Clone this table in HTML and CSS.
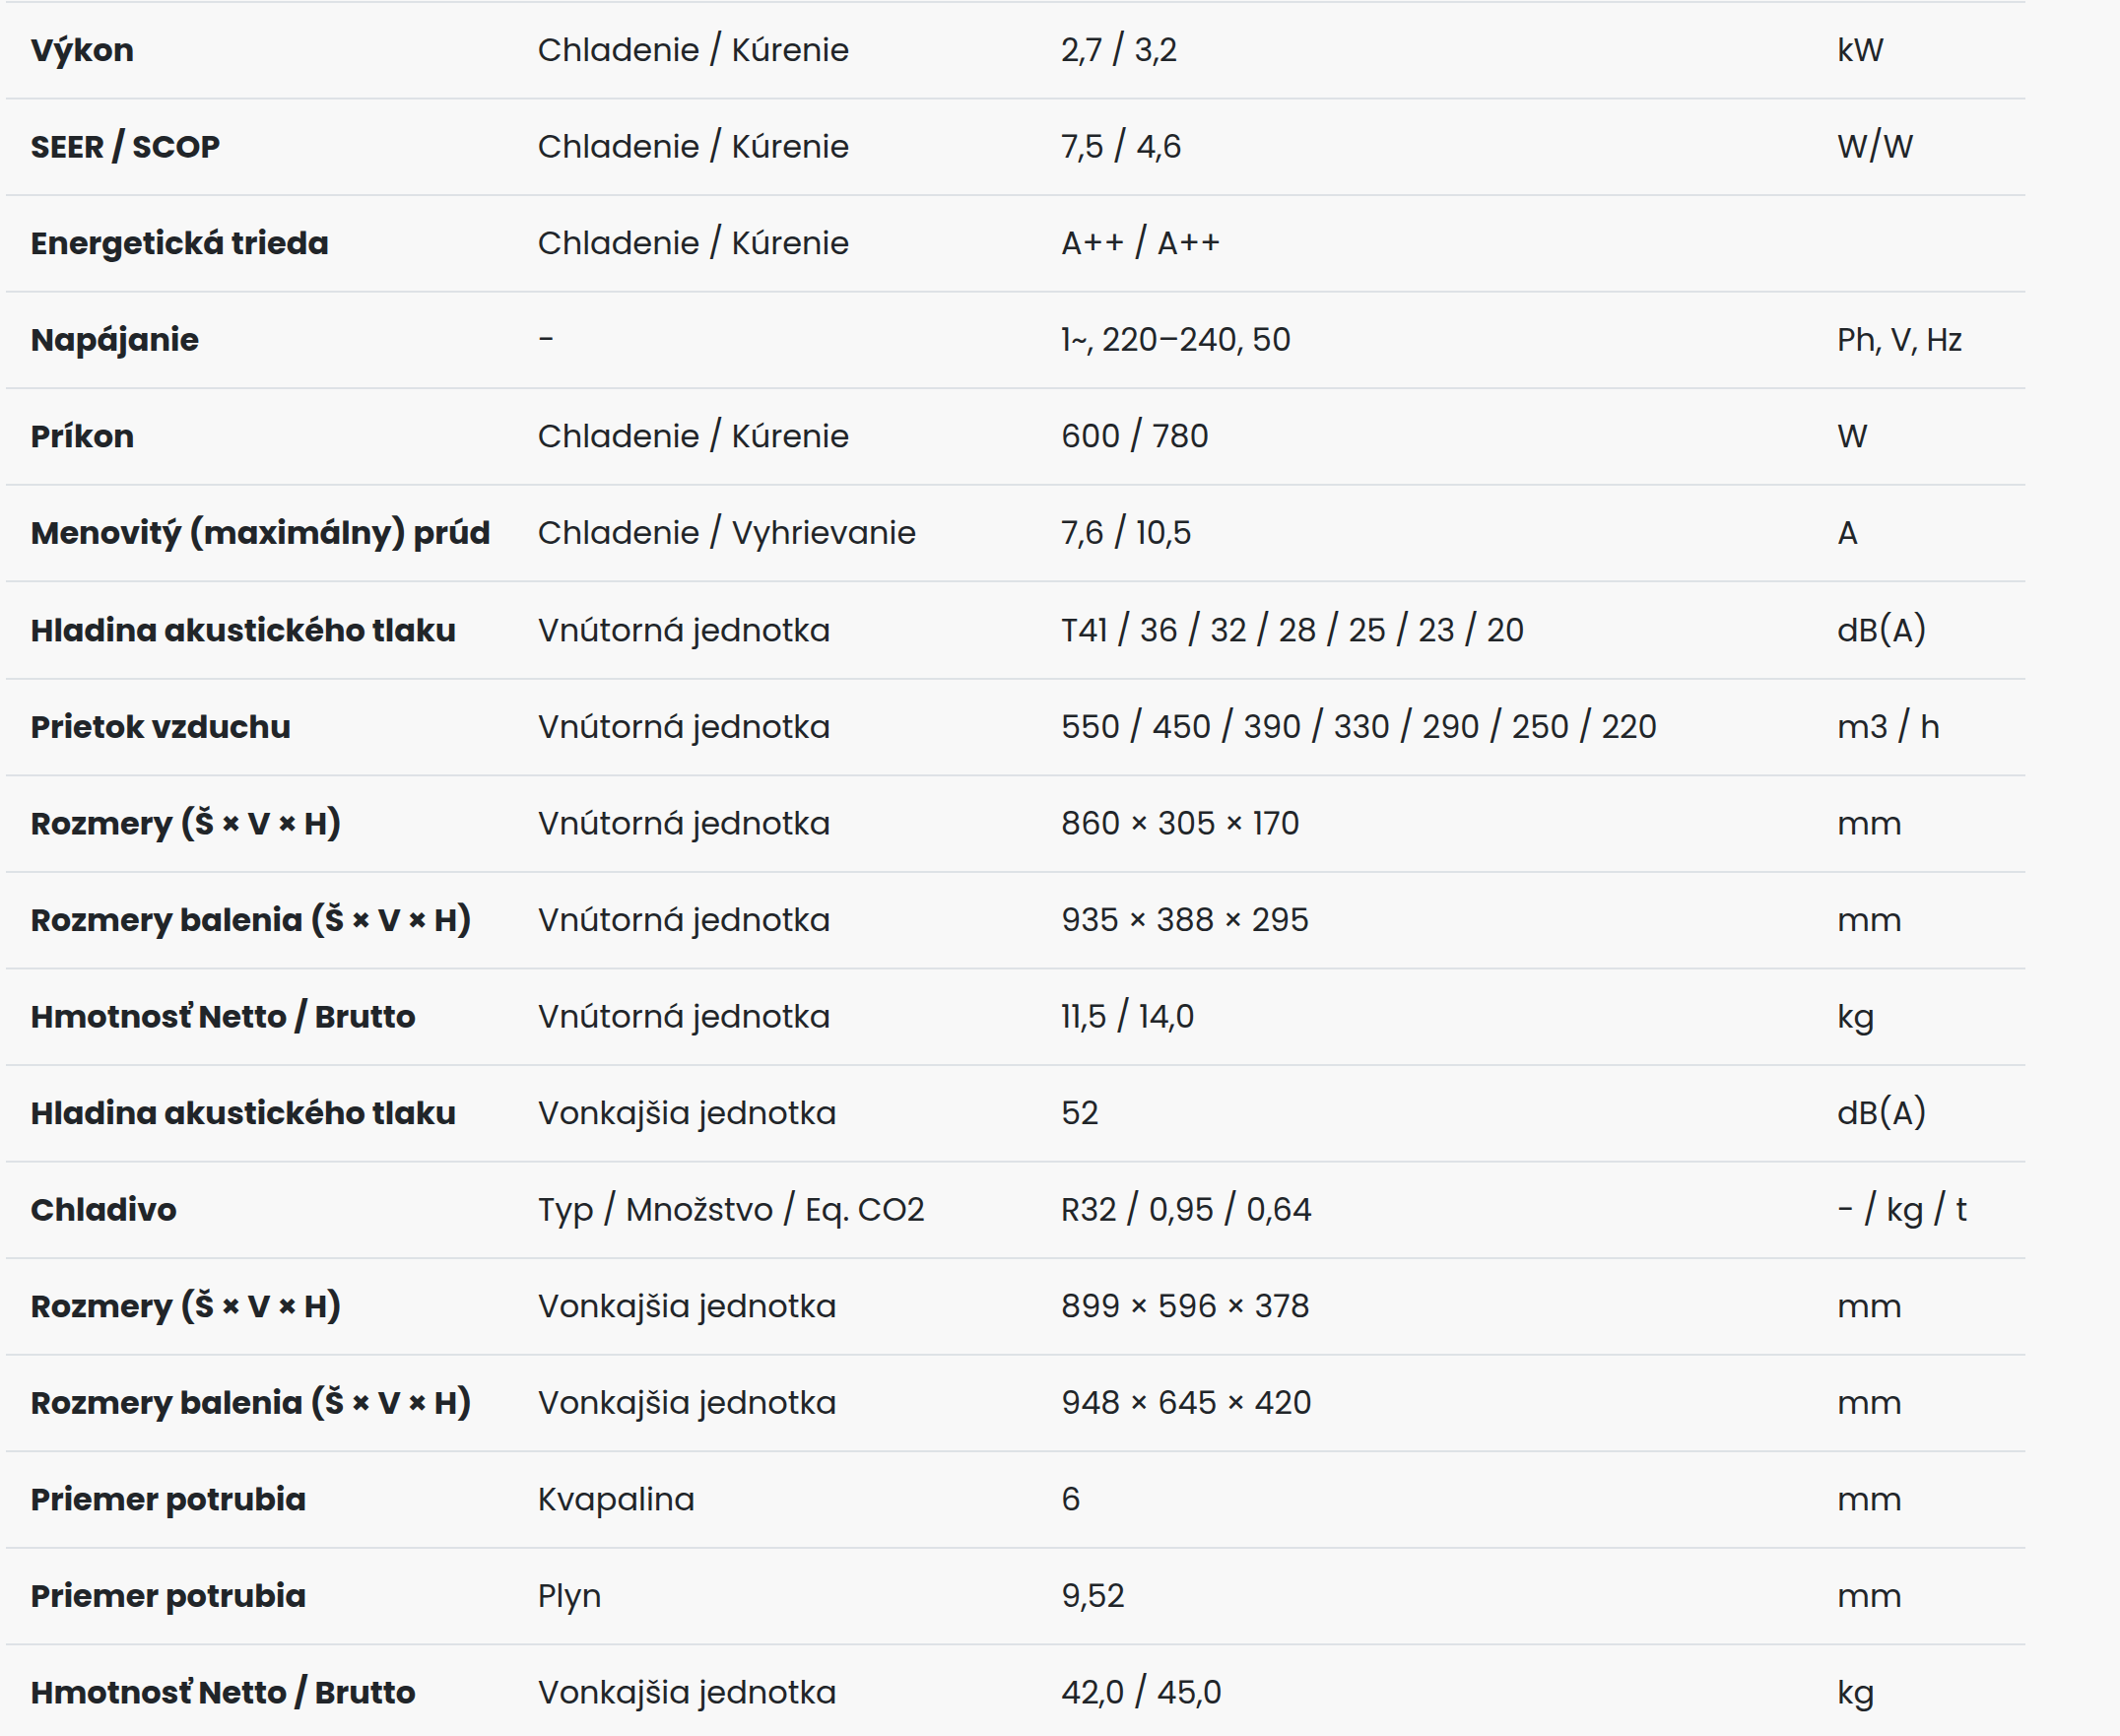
FILE: index.html
```html
<!DOCTYPE html>
<html lang="sk">
<head>
<meta charset="utf-8">
<title>Technické parametre</title>
<link rel="stylesheet" href="styles.css">
</head>
<body>
<div class="specs">
  <div class="row"><div class="name">Výkon</div><div class="cond">Chladenie / Kúrenie</div><div class="val">2,7 / 3,2</div><div class="unit">kW</div></div>
  <div class="row"><div class="name">SEER / SCOP</div><div class="cond">Chladenie / Kúrenie</div><div class="val">7,5 / 4,6</div><div class="unit">W/W</div></div>
  <div class="row"><div class="name">Energetická trieda</div><div class="cond">Chladenie / Kúrenie</div><div class="val">A++ / A++</div><div class="unit"></div></div>
  <div class="row"><div class="name">Napájanie</div><div class="cond">-</div><div class="val">1~, 220–240, 50</div><div class="unit">Ph, V, Hz</div></div>
  <div class="row"><div class="name">Príkon</div><div class="cond">Chladenie / Kúrenie</div><div class="val">600 / 780</div><div class="unit">W</div></div>
  <div class="row"><div class="name">Menovitý (maximálny) prúd</div><div class="cond">Chladenie / Vyhrievanie</div><div class="val">7,6 / 10,5</div><div class="unit">A</div></div>
  <div class="row"><div class="name">Hladina akustického tlaku</div><div class="cond">Vnútorná jednotka</div><div class="val">T41 / 36 / 32 / 28 / 25 / 23 / 20</div><div class="unit">dB(A)</div></div>
  <div class="row"><div class="name">Prietok vzduchu</div><div class="cond">Vnútorná jednotka</div><div class="val">550 / 450 / 390 / 330 / 290 / 250 / 220</div><div class="unit">m3 / h</div></div>
  <div class="row"><div class="name">Rozmery (Š × V × H)</div><div class="cond">Vnútorná jednotka</div><div class="val">860 × 305 × 170</div><div class="unit">mm</div></div>
  <div class="row"><div class="name">Rozmery balenia (Š × V × H)</div><div class="cond">Vnútorná jednotka</div><div class="val">935 × 388 × 295</div><div class="unit">mm</div></div>
  <div class="row"><div class="name">Hmotnosť Netto / Brutto</div><div class="cond">Vnútorná jednotka</div><div class="val">11,5 / 14,0</div><div class="unit">kg</div></div>
  <div class="row"><div class="name">Hladina akustického tlaku</div><div class="cond">Vonkajšia jednotka</div><div class="val">52</div><div class="unit">dB(A)</div></div>
  <div class="row"><div class="name">Chladivo</div><div class="cond">Typ / Množstvo / Eq. CO2</div><div class="val">R32 / 0,95 / 0,64</div><div class="unit">- / kg / t</div></div>
  <div class="row"><div class="name">Rozmery (Š × V × H)</div><div class="cond">Vonkajšia jednotka</div><div class="val">899 × 596 × 378</div><div class="unit">mm</div></div>
  <div class="row"><div class="name">Rozmery balenia (Š × V × H)</div><div class="cond">Vonkajšia jednotka</div><div class="val">948 × 645 × 420</div><div class="unit">mm</div></div>
  <div class="row"><div class="name">Priemer potrubia</div><div class="cond">Kvapalina</div><div class="val">6</div><div class="unit">mm</div></div>
  <div class="row"><div class="name">Priemer potrubia</div><div class="cond">Plyn</div><div class="val">9,52</div><div class="unit">mm</div></div>
  <div class="row"><div class="name">Hmotnosť Netto / Brutto</div><div class="cond">Vonkajšia jednotka</div><div class="val">42,0 / 45,0</div><div class="unit">kg</div></div>
</div>
</body>
</html>
```
FILE: styles.css
```css
html, body {
  margin: 0;
  padding: 0;
  background: #f8f8f8;
}
body {
  font-family: "Poppins", Inter, "DejaVu Sans", sans-serif;
  color: #212529;
  font-size: 32px;
}
.specs {
  margin: 1px 0 0 6px;
  width: 2050px;
}
.row {
  display: grid;
  grid-template-columns: 515px 531px 788px 1fr;
  align-items: center;
  height: 96.08px;
  padding-left: 25px;
  border-top: 2px solid #dee2e6;
  white-space: nowrap;
}
.name {
  font-weight: 700;
}
.cond, .val, .unit {
  font-weight: 400;
}
```
